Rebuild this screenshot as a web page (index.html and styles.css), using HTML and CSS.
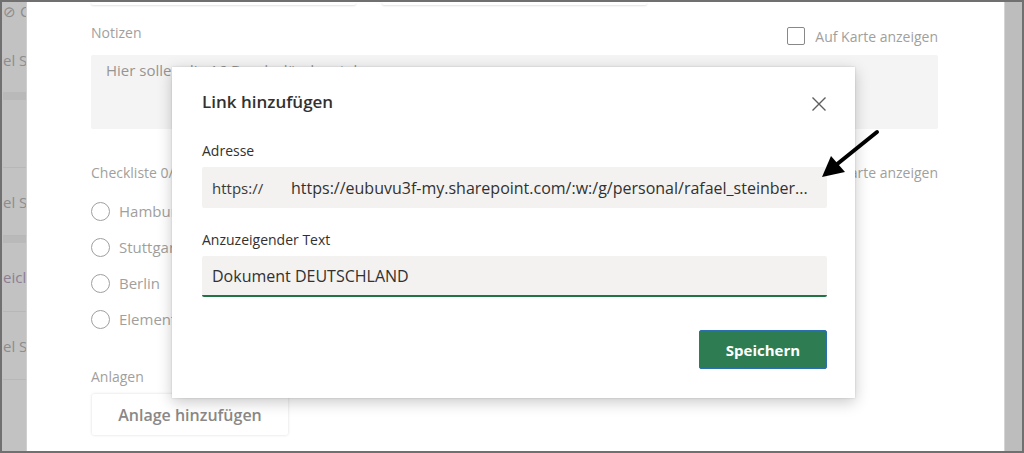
FILE: index.html
```html
<!DOCTYPE html>
<html lang="de">
<head>
    <meta charset="UTF-8">
    <meta name="viewport" content="width=device-width, initial-scale=1.0">
    <title>Link hinzufügen</title>
    <link rel="stylesheet" href="styles.css">
</head>
<body>
    <div class="frame">
        <div class="side-left">
            <div class="side-row side-first"><span class="side-icon">⊘ C</span><span class="side-text">el S</span></div>
            <div class="side-row side-empty"></div>
            <div class="side-row"><span class="side-text">el S</span></div>
            <div class="side-row side-band"><span class="side-text side-purple">eicl</span></div>
            <div class="side-row"><span class="side-text">el S</span></div>
        </div>

        <div class="panel">
            <div class="top-fields">
                <div class="ghost-field"></div>
                <div class="ghost-field"></div>
            </div>

            <div class="row-head">
                <span class="label">Notizen</span>
                <label class="map-check"><span class="checkbox"></span>Auf Karte anzeigen</label>
            </div>
            <div class="notes">Hier sollen die 16 Bundesländer stehen</div>

            <div class="row-head row-check">
                <span class="label">Checkliste 0/4</span>
                <span class="label">Auf Karte anzeigen</span>
            </div>
            <ul class="checklist">
                <li><span class="radio"></span>Hamburg</li>
                <li><span class="radio"></span>Stuttgart</li>
                <li><span class="radio"></span>Berlin</li>
                <li><span class="radio"></span>Element hinzufügen</li>
            </ul>

            <div class="label label-attach">Anlagen</div>
            <button class="attach-btn">Anlage hinzufügen</button>
        </div>

        <div class="side-right"></div>

        <div class="dialog">
            <div class="dialog-head">
                <h2>Link hinzufügen</h2>
                <svg class="close" width="16" height="16" viewBox="0 0 16 16">
                    <path d="M1.5 1.5 L14.5 14.5 M14.5 1.5 L1.5 14.5" stroke="#605e5c" stroke-width="1.4" fill="none"/>
                </svg>
            </div>

            <label class="field-label">Adresse</label>
            <div class="field">
                <span class="prefix">https://</span>
                <span class="url">https://eubuvu3f-my.sharepoint.com/:w:/g/personal/rafael_steinber...</span>
            </div>

            <label class="field-label">Anzuzeigender Text</label>
            <div class="field field-active">Dokument DEUTSCHLAND</div>

            <div class="dialog-foot">
                <button class="save-btn">Speichern</button>
            </div>
        </div>

        <svg class="arrow" width="1020" height="449" viewBox="2 2 1020 449">
            <line x1="877" y1="132" x2="836" y2="165" stroke="#000" stroke-width="4" stroke-linecap="round"/>
            <polygon points="822,177 831,156 845,172" fill="#000"/>
        </svg>
    </div>
</body>
</html>
```

FILE: styles.css
```css
body {
    margin: 0;
    font-family: "Open Sans", "Noto Sans", sans-serif;
    background: #fff;
}
.frame {
    position: relative;
    display: flex;
    width: 1024px;
    height: 453px;
    box-sizing: border-box;
    border: 2px solid #707070;
    overflow: hidden;
}

/* background list, greyed on the left */
.side-left {
    width: 23px;
    flex: none;
    background: #c2c2c2;
    border-right: 1px solid #cfcfcf;
    overflow: hidden;
    padding-left: 1px;
}
.side-row {
    height: 67px;
    border-bottom: 1px solid #b7b7b7;
    display: flex;
    align-items: center;
    font-size: 15px;
    color: #8d8d8d;
    white-space: nowrap;
}
.side-first {
    height: 98px;
    flex-direction: column;
    align-items: flex-start;
    justify-content: space-between;
    padding: 0 0 22px;
    box-sizing: border-box;
    border-bottom: 8px solid #b9b9b9;
}
.side-icon {
    font-size: 15px;
    line-height: 18px;
}
.side-empty {
    height: 67px;
}
.side-band {
    border-top: 7px solid #b9b9b9;
    height: 68px;
}
.side-purple {
    color: #8a7f93;
}
.side-right {
    width: 17px;
    flex: none;
    background: #bdbdbd;
    border-left: 1px solid #d4d4d4;
}

/* panel behind the dialog */
.panel {
    flex: 1;
    background: #fff;
    padding: 0 66px 0 64px;
    color: #a19f9d;
    font-size: 14px;
}
.top-fields {
    display: flex;
    gap: 26px;
    height: 4px;
}
.ghost-field {
    width: 265px;
    height: 3px;
    box-shadow: 0 1px 2px rgba(0, 0, 0, 0.12);
    border-radius: 0 0 2px 2px;
}
.row-head {
    display: flex;
    justify-content: space-between;
    align-items: center;
    margin-top: 15px;
    height: 22px;
}
.map-check {
    display: flex;
    align-items: center;
    gap: 10px;
    margin-top: 8px;
}
.checkbox {
    width: 16px;
    height: 16px;
    border: 1px solid #8a8886;
    border-radius: 2px;
}
.notes {
    margin-top: 12px;
    height: 74px;
    background: #f4f4f4;
    border-radius: 2px;
    padding: 5px 15px;
    box-sizing: border-box;
    font-size: 15px;
    color: #979593;
}
.row-check {
    margin-top: 32px;
}
.checklist {
    list-style: none;
    margin: 17px 0 0;
    padding: 0;
    display: flex;
    flex-direction: column;
    gap: 14px;
}
.checklist li {
    display: flex;
    align-items: center;
    gap: 9px;
    height: 22px;
    font-size: 15px;
    color: #a19f9d;
}
.radio {
    width: 17px;
    height: 17px;
    border: 1px solid #a19f9d;
    border-radius: 50%;
}
.label-attach {
    margin-top: 38px;
    line-height: 18px;
}
.attach-btn {
    margin-top: 8px;
    margin-left: 1px;
    width: 196px;
    height: 41px;
    background: #fff;
    border: none;
    border-radius: 2px;
    box-shadow: 0 0 3px rgba(0, 0, 0, 0.15);
    font-family: inherit;
    font-size: 16px;
    font-weight: 600;
    color: #8a8886;
}

/* dialog */
.dialog {
    position: absolute;
    left: 170px;
    top: 65px;
    width: 683px;
    height: 331px;
    box-sizing: border-box;
    background: #fff;
    box-shadow: 0 4px 14px rgba(0, 0, 0, 0.22), 0 0 2px rgba(0, 0, 0, 0.15);
    padding: 22px 28px 0 30px;
    color: #323130;
    display: flex;
    flex-direction: column;
}
.dialog-head {
    display: flex;
    justify-content: space-between;
    align-items: center;
    height: 24px;
}
.dialog-head h2 {
    margin: 0;
    font-size: 17px;
    font-weight: 600;
}
.close {
    margin-top: 5px;
}
.field-label {
    font-size: 14px;
    line-height: 18px;
    margin-top: 29px;
}
.field-label + .field {
    margin-top: 7px;
}
.field + .field-label {
    margin-top: 23px;
}
.field {
    display: flex;
    align-items: center;
    height: 41px;
    box-sizing: border-box;
    background: #f3f2f1;
    border-radius: 2px;
    padding: 0 10px;
    font-size: 16px;
    white-space: nowrap;
    overflow: hidden;
}
.prefix {
    width: 79px;
    flex: none;
    font-size: 15px;
    color: #3b3a39;
}
.url {
    color: #323130;
}
.field-active {
    border-bottom: 2px solid #217346;
}
.dialog-foot {
    display: flex;
    justify-content: flex-end;
    margin-top: 33px;
}
.save-btn {
    width: 128px;
    height: 39px;
    background: #2e7d52;
    border: 1px solid #2b6fb0;
    border-radius: 2px;
    color: #fff;
    font-family: inherit;
    font-size: 15px;
    font-weight: 700;
}

.arrow {
    position: absolute;
    left: 0;
    top: 0;
    pointer-events: none;
}
```
